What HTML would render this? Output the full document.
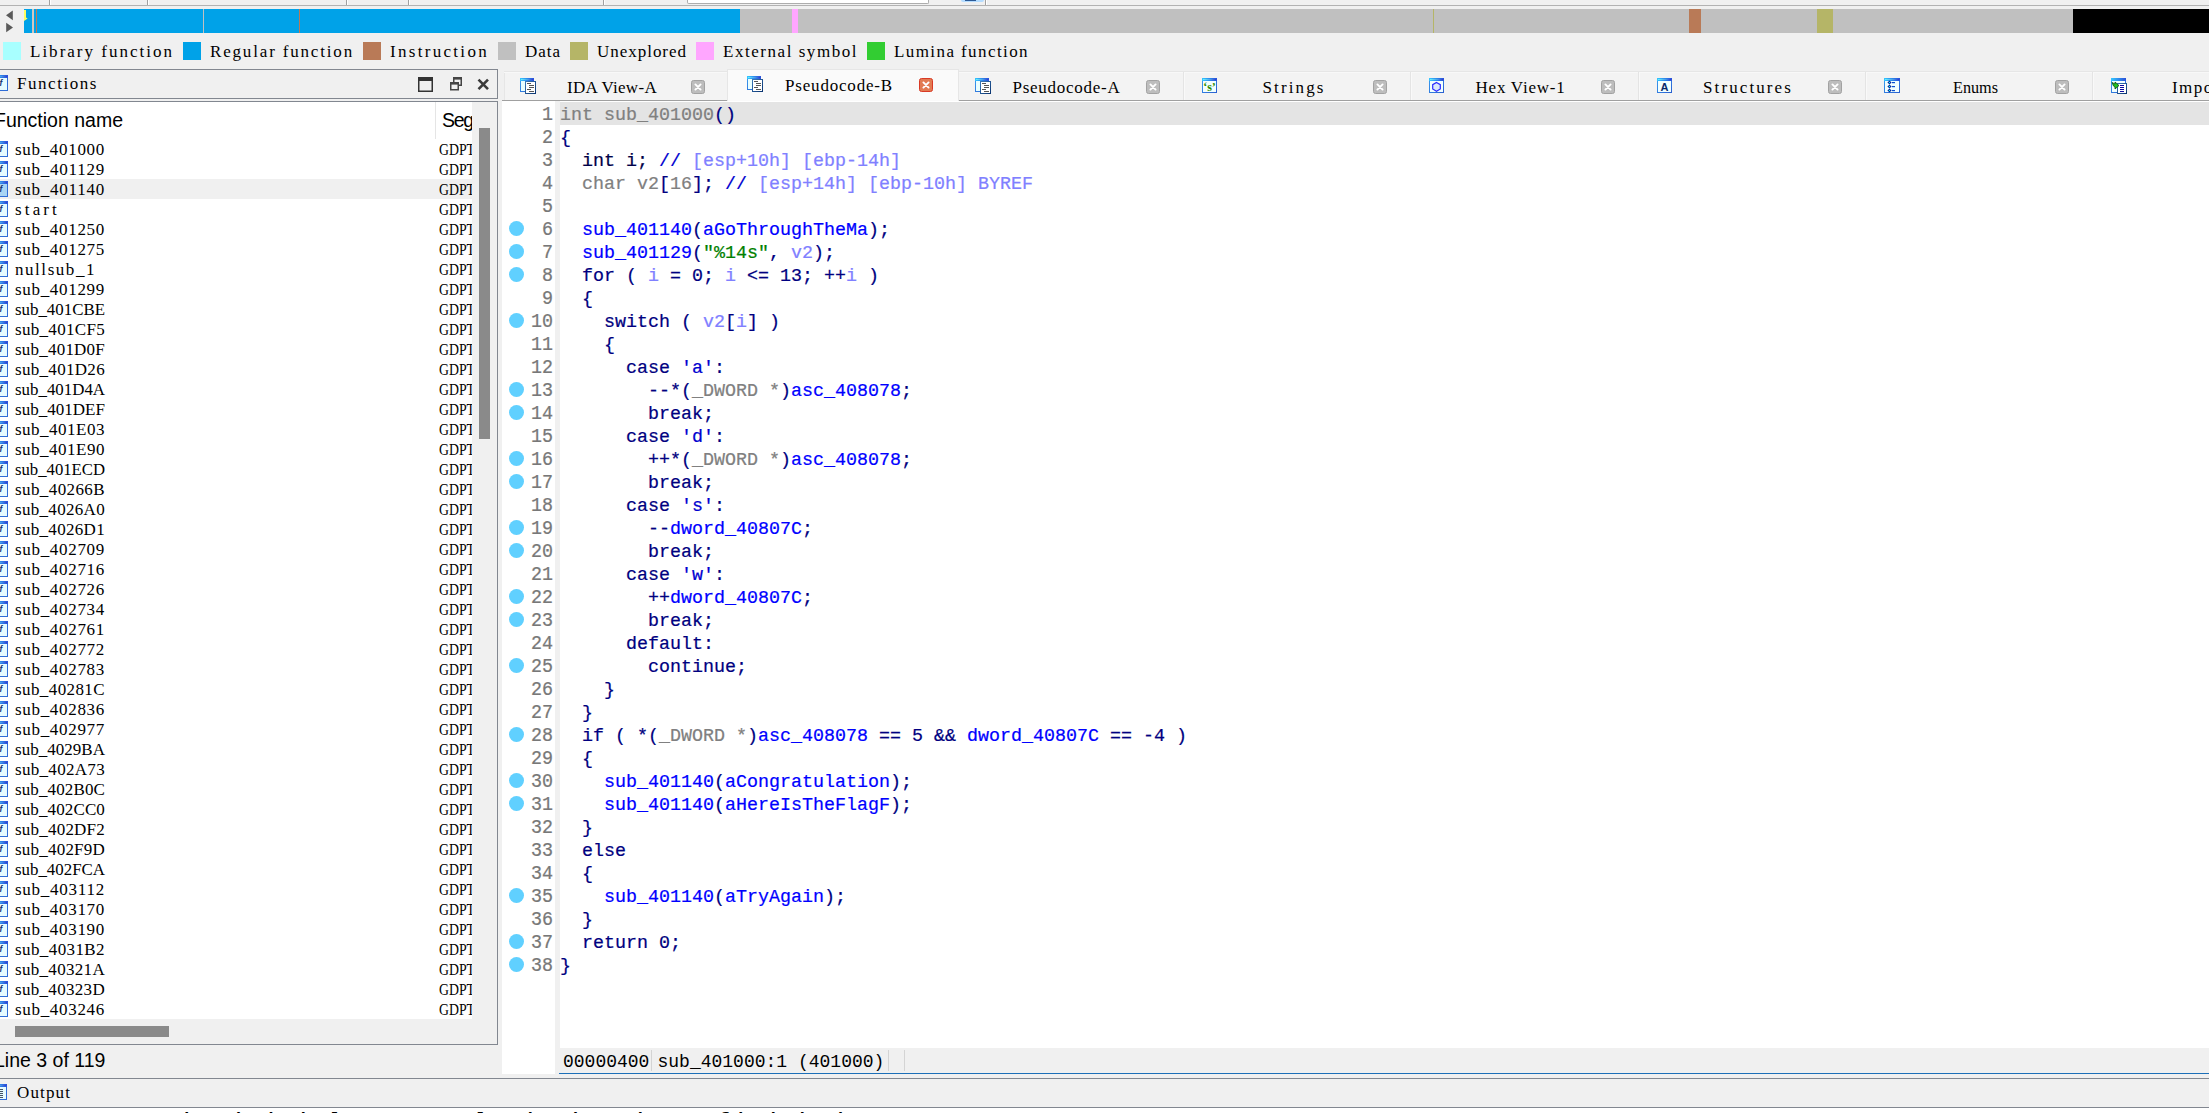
<!DOCTYPE html>
<html lang="en"><head><meta charset="utf-8"><title>IDA</title>
<style>
*{box-sizing:border-box;margin:0;padding:0}
html,body{width:2209px;height:1113px;overflow:hidden;background:#f0f0f0}
body{position:relative;font-family:"Liberation Sans",sans-serif;color:#000}
.a{position:absolute}
.ss{position:absolute;font:17px/22px "Liberation Serif",serif;white-space:pre;transform-origin:0 0;color:#000}
.ui{position:absolute;font:19.5px/24px "Liberation Sans",sans-serif;white-space:pre;color:#000}
.sq{position:absolute;top:42px;width:18px;height:18px}
.lg{top:41px}
.row{position:absolute;left:0;width:472px;height:20px}
.row .ss{left:15px;top:0}
.row .sg{left:439px}
.row svg{position:absolute;left:-8px;top:2px}
.cl{position:absolute;left:0;width:1707px;height:23px;font:18.333px/23px "Liberation Mono",monospace;white-space:pre}
.cl b{font-weight:normal;position:absolute;left:58px;top:2px;-webkit-text-stroke:.22px;transform:scaleY(1.03);transform-origin:0 16px}
.cl i{font-style:normal;position:absolute;left:0;width:51px;text-align:right;color:#787878;top:2px;-webkit-text-stroke:.22px;transform:scaleY(1.06);transform-origin:0 16px}
.cl u{text-decoration:none;position:absolute;left:7px;top:4px;width:15px;height:15px;border-radius:50%;background:#60d0ff}
.tb svg{position:absolute}
</style></head>
<body>
<svg width="0" height="0" style="position:absolute">
<defs>
<linearGradient id="gb" x1="0" y1="0" x2="1" y2="0"><stop offset="0" stop-color="#35c8ff"/><stop offset="1" stop-color="#2a4fd8"/></linearGradient>
<linearGradient id="gw" x1="0" y1="0" x2="1" y2="1"><stop offset="0" stop-color="#3a9cf0"/><stop offset="1" stop-color="#2a60d0"/></linearGradient>
<linearGradient id="gd" x1="0" y1="0" x2="1" y2="1"><stop offset="0" stop-color="#3a78b8"/><stop offset="1" stop-color="#0a3470"/></linearGradient>
<linearGradient id="gh" x1="0" y1="0" x2="1" y2="0"><stop offset="0" stop-color="#6af4ff"/><stop offset=".6" stop-color="#4a9ae8"/><stop offset="1" stop-color="#3038d0"/></linearGradient>
<g id="win"><rect x="0.5" y="0.5" width="14" height="14" fill="#f2ffff" stroke="url(#gw)"/><rect x="0" y="0" width="15" height="3" fill="url(#gb)"/><rect x="1" y="1" width="13" height="1" fill="url(#gh)"/></g>
<g id="doc"><rect x="5.5" y="3.5" width="10" height="12" fill="#fff" stroke="url(#gd)"/><rect x="7" y="5" width="4" height="1" fill="#555"/><rect x="9" y="7" width="5" height="1" fill="#555"/><rect x="9" y="9" width="5" height="1" fill="#555"/><rect x="7" y="11" width="4" height="1" fill="#555"/><rect x="9" y="13" width="5" height="1" fill="#555"/></g>
<g id="icode"><rect x="0.5" y="0.5" width="13" height="13" fill="#eaffff" stroke="url(#gw)"/><rect x="0" y="0" width="14" height="3" fill="url(#gb)"/><rect x="1" y="1" width="12" height="1" fill="url(#gh)"/><use href="#doc"/></g>
<g id="xg"><rect x="0.5" y="0.5" width="13" height="13" rx="2" fill="#bdbdbd" stroke="#a2a2a2"/><path d="M4.4 4.4L9.6 9.6M9.6 4.4L4.4 9.6" stroke="#fff" stroke-width="1.9" stroke-linecap="round"/></g>
<g id="xr"><rect x="0.5" y="0.5" width="13" height="13" rx="2" fill="#e27a52" stroke="#d93a25"/><path d="M4.4 4.4L9.6 9.6M9.6 4.4L4.4 9.6" stroke="#fff" stroke-width="1.9" stroke-linecap="round"/></g>
<g id="fi"><rect x="0.5" y="0.5" width="15" height="15" fill="#e6fbff" stroke="#2e6cd6"/><rect x="0" y="0" width="16" height="3" fill="url(#gb)"/><rect x="1" y="1" width="14" height="1" fill="url(#gh)"/></g>
<g id="fis"><rect x="0.5" y="0.5" width="15" height="15" fill="#a8d4f4" stroke="#2e6cd6"/><rect x="0" y="0" width="16" height="3" fill="url(#gb)"/><rect x="1" y="1" width="14" height="1" fill="url(#gh)"/></g>
</defs></svg>
<div class="a" style="left:0;top:5px;width:2209px;height:1px;background:#b2b2b2"></div>
<div class="a" style="left:49px;top:0;width:1px;height:5px;background:#a0a0a0"></div><div class="a" style="left:50px;top:0;width:1px;height:5px;background:#fff"></div>
<div class="a" style="left:147px;top:0;width:1px;height:5px;background:#a0a0a0"></div><div class="a" style="left:148px;top:0;width:1px;height:5px;background:#fff"></div>
<div class="a" style="left:346px;top:0;width:1px;height:5px;background:#a0a0a0"></div><div class="a" style="left:347px;top:0;width:1px;height:5px;background:#fff"></div>
<div class="a" style="left:408px;top:0;width:1px;height:5px;background:#a0a0a0"></div><div class="a" style="left:409px;top:0;width:1px;height:5px;background:#fff"></div>
<div class="a" style="left:603px;top:0;width:1px;height:5px;background:#a0a0a0"></div><div class="a" style="left:604px;top:0;width:1px;height:5px;background:#fff"></div>
<div class="a" style="left:985px;top:0;width:1px;height:5px;background:#a0a0a0"></div><div class="a" style="left:986px;top:0;width:1px;height:5px;background:#fff"></div>
<div class="a" style="left:687px;top:0;width:242px;height:4px;background:#fff;border:1px solid #adadad;border-top:0;border-radius:0 0 2px 2px"></div>
<div class="a" style="left:961px;top:0;width:23px;height:2px;background:#b4dcff;border-radius:0 0 3px 3px"></div><div class="a" style="left:965px;top:0;width:11px;height:1px;background:#2c5a96"></div>
<svg class="a" style="left:0;top:9px" width="24" height="24" viewBox="0 0 24 24"><path d="M6 6.3L12.8 1.5V11.2Z" fill="#5a5a5a"/><path d="M6.2 13.8V23.3L13 18.6Z" fill="#5a5a5a"/></svg>
<div class="a" style="left:24px;top:9px;width:2185px;height:24px;background:#c0c0c0;overflow:hidden"><div class="a" style="left:0px;top:0;width:716px;height:24px;background:#00a2e8"></div><div class="a" style="left:8px;top:0;width:2px;height:24px;background:#d3c6bf"></div><div class="a" style="left:12px;top:0;width:1px;height:24px;background:#b97a57"></div><div class="a" style="left:179px;top:0;width:1px;height:24px;background:#c0c0c0"></div><div class="a" style="left:275px;top:0;width:1px;height:24px;background:#b97a57"></div><div class="a" style="left:768px;top:0;width:6px;height:24px;background:#ffa6ff"></div><div class="a" style="left:1409px;top:0;width:1px;height:24px;background:#b5b567"></div><div class="a" style="left:1665px;top:0;width:12px;height:24px;background:#b97a57"></div><div class="a" style="left:1793px;top:0;width:16px;height:24px;background:#b5b567"></div><div class="a" style="left:2049px;top:0;width:136px;height:24px;background:#000"></div><svg class="a" style="left:0;top:1px" width="5" height="11" viewBox="0 0 5 11"><path d="M0 0H2V7.5L3.6 8.5L0 11Z" fill="#ffff60"/></svg></div>
<div class="sq" style="left:3px;background:#a8ffff"></div><div class="ss lg" style="left:30px;letter-spacing:2.007px;">Library function</div>
<div class="sq" style="left:183px;background:#00a2e8"></div><div class="ss lg" style="left:210px;letter-spacing:1.830px;">Regular function</div>
<div class="sq" style="left:363px;background:#b97a57"></div><div class="ss lg" style="left:390px;letter-spacing:2.304px;">Instruction</div>
<div class="sq" style="left:498px;background:#c0c0c0"></div><div class="ss lg" style="left:525px;letter-spacing:0.977px;">Data</div>
<div class="sq" style="left:570px;background:#b5b567"></div><div class="ss lg" style="left:597px;letter-spacing:0.973px;">Unexplored</div>
<div class="sq" style="left:696px;background:#ffa6ff"></div><div class="ss lg" style="left:723px;letter-spacing:1.540px;">External symbol</div>
<div class="sq" style="left:867px;background:#32cd32"></div><div class="ss lg" style="left:894px;letter-spacing:1.415px;">Lumina function</div>
<div class="a" style="left:-1px;top:69px;width:499px;height:30px;border:1px solid #828790;background:#f0f0f0"></div>
<svg class="a" style="left:-8px;top:75px" width="16" height="16"><use href="#fi"/><text x="8.8" y="10.8" font-family="Liberation Sans,sans-serif" font-style="italic" font-weight="bold" font-size="8.5" text-anchor="middle" fill="#14326e">f</text></svg>
<div class="ss" style="left:17px;top:73px;letter-spacing:1.549px;">Functions</div>
<svg class="a" style="left:418px;top:77px" width="15" height="15"><rect x="0.75" y="0.75" width="13.5" height="13.5" fill="#f0f0f0" stroke="#333" stroke-width="1.5"/><rect x="0" y="0" width="15" height="4" fill="#333"/></svg>
<svg class="a" style="left:450px;top:77px" width="13" height="14"><rect x="3.75" y="0.75" width="7.5" height="7.5" fill="#f0f0f0" stroke="#444" stroke-width="1.5"/><rect x="3" y="0" width="9" height="2.6" fill="#444"/><rect x="0.75" y="5.75" width="7.5" height="7" fill="#f0f0f0" stroke="#444" stroke-width="1.5"/><rect x="0" y="5" width="9" height="2.6" fill="#444"/></svg>
<svg class="a" style="left:477px;top:78px" width="13" height="13"><path d="M1.5 1.7L11 11.2M11 1.7L1.5 11.2" stroke="#3a3a3a" stroke-width="2.6" fill="none"/></svg>
<div class="a" style="left:-1px;top:101px;width:499px;height:944px;border:1px solid #828790;background:#f0f0f0"></div>
<div class="a" style="left:0;top:102px;width:472px;height:917px;background:#fff;overflow:hidden">
<div class="a" style="left:435px;top:0;width:1px;height:37px;background:#e5e5e5"></div><div class="ui" style="left:-6px;top:6px">Function name</div><div class="ui" style="left:442px;top:6px;letter-spacing:-1.3px">Seg</div>
<div class="row" style="top:37px"><svg width="16" height="16"><use href="#fi"/><text x="8.8" y="10.8" font-family="Liberation Sans,sans-serif" font-style="italic" font-weight="bold" font-size="8.5" text-anchor="middle" fill="#14326e">f</text></svg><span class="ss" style="letter-spacing:0.688px;">sub_401000</span><span class="ss sg" style="transform:scaleX(0.8107);">GDPT</span></div>
<div class="row" style="top:57px"><svg width="16" height="16"><use href="#fi"/><text x="8.8" y="10.8" font-family="Liberation Sans,sans-serif" font-style="italic" font-weight="bold" font-size="8.5" text-anchor="middle" fill="#14326e">f</text></svg><span class="ss" style="letter-spacing:0.750px;">sub_401129</span><span class="ss sg" style="transform:scaleX(0.8107);">GDPT</span></div>
<div class="row" style="top:77px;background:#f0f0f0"><svg width="16" height="16"><use href="#fis"/><text x="8.8" y="10.8" font-family="Liberation Sans,sans-serif" font-style="italic" font-weight="bold" font-size="8.5" text-anchor="middle" fill="#14326e">f</text></svg><span class="ss" style="letter-spacing:0.750px;">sub_401140</span><span class="ss sg" style="transform:scaleX(0.8107);">GDPT</span></div>
<div class="row" style="top:97px"><svg width="16" height="16"><use href="#fi"/><text x="8.8" y="10.8" font-family="Liberation Sans,sans-serif" font-style="italic" font-weight="bold" font-size="8.5" text-anchor="middle" fill="#14326e">f</text></svg><span class="ss" style="letter-spacing:3.144px;">start</span><span class="ss sg" style="transform:scaleX(0.8107);">GDPT</span></div>
<div class="row" style="top:117px"><svg width="16" height="16"><use href="#fi"/><text x="8.8" y="10.8" font-family="Liberation Sans,sans-serif" font-style="italic" font-weight="bold" font-size="8.5" text-anchor="middle" fill="#14326e">f</text></svg><span class="ss" style="letter-spacing:0.688px;">sub_401250</span><span class="ss sg" style="transform:scaleX(0.8107);">GDPT</span></div>
<div class="row" style="top:137px"><svg width="16" height="16"><use href="#fi"/><text x="8.8" y="10.8" font-family="Liberation Sans,sans-serif" font-style="italic" font-weight="bold" font-size="8.5" text-anchor="middle" fill="#14326e">f</text></svg><span class="ss" style="letter-spacing:0.688px;">sub_401275</span><span class="ss sg" style="transform:scaleX(0.8107);">GDPT</span></div>
<div class="row" style="top:157px"><svg width="16" height="16"><use href="#fi"/><text x="8.8" y="10.8" font-family="Liberation Sans,sans-serif" font-style="italic" font-weight="bold" font-size="8.5" text-anchor="middle" fill="#14326e">f</text></svg><span class="ss" style="letter-spacing:1.549px;">nullsub_1</span><span class="ss sg" style="transform:scaleX(0.8107);">GDPT</span></div>
<div class="row" style="top:177px"><svg width="16" height="16"><use href="#fi"/><text x="8.8" y="10.8" font-family="Liberation Sans,sans-serif" font-style="italic" font-weight="bold" font-size="8.5" text-anchor="middle" fill="#14326e">f</text></svg><span class="ss" style="letter-spacing:0.688px;">sub_401299</span><span class="ss sg" style="transform:scaleX(0.8107);">GDPT</span></div>
<div class="row" style="top:197px"><svg width="16" height="16"><use href="#fi"/><text x="8.8" y="10.8" font-family="Liberation Sans,sans-serif" font-style="italic" font-weight="bold" font-size="8.5" text-anchor="middle" fill="#14326e">f</text></svg><span class="ss" style="transform:scaleX(0.9924);">sub_401CBE</span><span class="ss sg" style="transform:scaleX(0.8107);">GDPT</span></div>
<div class="row" style="top:217px"><svg width="16" height="16"><use href="#fi"/><text x="8.8" y="10.8" font-family="Liberation Sans,sans-serif" font-style="italic" font-weight="bold" font-size="8.5" text-anchor="middle" fill="#14326e">f</text></svg><span class="ss" style="letter-spacing:0.308px;">sub_401CF5</span><span class="ss sg" style="transform:scaleX(0.8107);">GDPT</span></div>
<div class="row" style="top:237px"><svg width="16" height="16"><use href="#fi"/><text x="8.8" y="10.8" font-family="Liberation Sans,sans-serif" font-style="italic" font-weight="bold" font-size="8.5" text-anchor="middle" fill="#14326e">f</text></svg><span class="ss" style="letter-spacing:0.214px;">sub_401D0F</span><span class="ss sg" style="transform:scaleX(0.8107);">GDPT</span></div>
<div class="row" style="top:257px"><svg width="16" height="16"><use href="#fi"/><text x="8.8" y="10.8" font-family="Liberation Sans,sans-serif" font-style="italic" font-weight="bold" font-size="8.5" text-anchor="middle" fill="#14326e">f</text></svg><span class="ss" style="letter-spacing:0.309px;">sub_401D26</span><span class="ss sg" style="transform:scaleX(0.8107);">GDPT</span></div>
<div class="row" style="top:277px"><svg width="16" height="16"><use href="#fi"/><text x="8.8" y="10.8" font-family="Liberation Sans,sans-serif" font-style="italic" font-weight="bold" font-size="8.5" text-anchor="middle" fill="#14326e">f</text></svg><span class="ss" style="transform:scaleX(0.9926);">sub_401D4A</span><span class="ss sg" style="transform:scaleX(0.8107);">GDPT</span></div>
<div class="row" style="top:297px"><svg width="16" height="16"><use href="#fi"/><text x="8.8" y="10.8" font-family="Liberation Sans,sans-serif" font-style="italic" font-weight="bold" font-size="8.5" text-anchor="middle" fill="#14326e">f</text></svg><span class="ss" style="letter-spacing:0.027px;">sub_401DEF</span><span class="ss sg" style="transform:scaleX(0.8107);">GDPT</span></div>
<div class="row" style="top:317px"><svg width="16" height="16"><use href="#fi"/><text x="8.8" y="10.8" font-family="Liberation Sans,sans-serif" font-style="italic" font-weight="bold" font-size="8.5" text-anchor="middle" fill="#14326e">f</text></svg><span class="ss" style="letter-spacing:0.500px;">sub_401E03</span><span class="ss sg" style="transform:scaleX(0.8107);">GDPT</span></div>
<div class="row" style="top:337px"><svg width="16" height="16"><use href="#fi"/><text x="8.8" y="10.8" font-family="Liberation Sans,sans-serif" font-style="italic" font-weight="bold" font-size="8.5" text-anchor="middle" fill="#14326e">f</text></svg><span class="ss" style="letter-spacing:0.500px;">sub_401E90</span><span class="ss sg" style="transform:scaleX(0.8107);">GDPT</span></div>
<div class="row" style="top:357px"><svg width="16" height="16"><use href="#fi"/><text x="8.8" y="10.8" font-family="Liberation Sans,sans-serif" font-style="italic" font-weight="bold" font-size="8.5" text-anchor="middle" fill="#14326e">f</text></svg><span class="ss" style="transform:scaleX(0.9823);">sub_401ECD</span><span class="ss sg" style="transform:scaleX(0.8107);">GDPT</span></div>
<div class="row" style="top:377px"><svg width="16" height="16"><use href="#fi"/><text x="8.8" y="10.8" font-family="Liberation Sans,sans-serif" font-style="italic" font-weight="bold" font-size="8.5" text-anchor="middle" fill="#14326e">f</text></svg><span class="ss" style="letter-spacing:0.403px;">sub_40266B</span><span class="ss sg" style="transform:scaleX(0.8107);">GDPT</span></div>
<div class="row" style="top:397px"><svg width="16" height="16"><use href="#fi"/><text x="8.8" y="10.8" font-family="Liberation Sans,sans-serif" font-style="italic" font-weight="bold" font-size="8.5" text-anchor="middle" fill="#14326e">f</text></svg><span class="ss" style="letter-spacing:0.309px;">sub_4026A0</span><span class="ss sg" style="transform:scaleX(0.8107);">GDPT</span></div>
<div class="row" style="top:417px"><svg width="16" height="16"><use href="#fi"/><text x="8.8" y="10.8" font-family="Liberation Sans,sans-serif" font-style="italic" font-weight="bold" font-size="8.5" text-anchor="middle" fill="#14326e">f</text></svg><span class="ss" style="letter-spacing:0.309px;">sub_4026D1</span><span class="ss sg" style="transform:scaleX(0.8107);">GDPT</span></div>
<div class="row" style="top:437px"><svg width="16" height="16"><use href="#fi"/><text x="8.8" y="10.8" font-family="Liberation Sans,sans-serif" font-style="italic" font-weight="bold" font-size="8.5" text-anchor="middle" fill="#14326e">f</text></svg><span class="ss" style="letter-spacing:0.688px;">sub_402709</span><span class="ss sg" style="transform:scaleX(0.8107);">GDPT</span></div>
<div class="row" style="top:457px"><svg width="16" height="16"><use href="#fi"/><text x="8.8" y="10.8" font-family="Liberation Sans,sans-serif" font-style="italic" font-weight="bold" font-size="8.5" text-anchor="middle" fill="#14326e">f</text></svg><span class="ss" style="letter-spacing:0.688px;">sub_402716</span><span class="ss sg" style="transform:scaleX(0.8107);">GDPT</span></div>
<div class="row" style="top:477px"><svg width="16" height="16"><use href="#fi"/><text x="8.8" y="10.8" font-family="Liberation Sans,sans-serif" font-style="italic" font-weight="bold" font-size="8.5" text-anchor="middle" fill="#14326e">f</text></svg><span class="ss" style="letter-spacing:0.688px;">sub_402726</span><span class="ss sg" style="transform:scaleX(0.8107);">GDPT</span></div>
<div class="row" style="top:497px"><svg width="16" height="16"><use href="#fi"/><text x="8.8" y="10.8" font-family="Liberation Sans,sans-serif" font-style="italic" font-weight="bold" font-size="8.5" text-anchor="middle" fill="#14326e">f</text></svg><span class="ss" style="letter-spacing:0.688px;">sub_402734</span><span class="ss sg" style="transform:scaleX(0.8107);">GDPT</span></div>
<div class="row" style="top:517px"><svg width="16" height="16"><use href="#fi"/><text x="8.8" y="10.8" font-family="Liberation Sans,sans-serif" font-style="italic" font-weight="bold" font-size="8.5" text-anchor="middle" fill="#14326e">f</text></svg><span class="ss" style="letter-spacing:0.688px;">sub_402761</span><span class="ss sg" style="transform:scaleX(0.8107);">GDPT</span></div>
<div class="row" style="top:537px"><svg width="16" height="16"><use href="#fi"/><text x="8.8" y="10.8" font-family="Liberation Sans,sans-serif" font-style="italic" font-weight="bold" font-size="8.5" text-anchor="middle" fill="#14326e">f</text></svg><span class="ss" style="letter-spacing:0.688px;">sub_402772</span><span class="ss sg" style="transform:scaleX(0.8107);">GDPT</span></div>
<div class="row" style="top:557px"><svg width="16" height="16"><use href="#fi"/><text x="8.8" y="10.8" font-family="Liberation Sans,sans-serif" font-style="italic" font-weight="bold" font-size="8.5" text-anchor="middle" fill="#14326e">f</text></svg><span class="ss" style="letter-spacing:0.688px;">sub_402783</span><span class="ss sg" style="transform:scaleX(0.8107);">GDPT</span></div>
<div class="row" style="top:577px"><svg width="16" height="16"><use href="#fi"/><text x="8.8" y="10.8" font-family="Liberation Sans,sans-serif" font-style="italic" font-weight="bold" font-size="8.5" text-anchor="middle" fill="#14326e">f</text></svg><span class="ss" style="letter-spacing:0.403px;">sub_40281C</span><span class="ss sg" style="transform:scaleX(0.8107);">GDPT</span></div>
<div class="row" style="top:597px"><svg width="16" height="16"><use href="#fi"/><text x="8.8" y="10.8" font-family="Liberation Sans,sans-serif" font-style="italic" font-weight="bold" font-size="8.5" text-anchor="middle" fill="#14326e">f</text></svg><span class="ss" style="letter-spacing:0.688px;">sub_402836</span><span class="ss sg" style="transform:scaleX(0.8107);">GDPT</span></div>
<div class="row" style="top:617px"><svg width="16" height="16"><use href="#fi"/><text x="8.8" y="10.8" font-family="Liberation Sans,sans-serif" font-style="italic" font-weight="bold" font-size="8.5" text-anchor="middle" fill="#14326e">f</text></svg><span class="ss" style="letter-spacing:0.688px;">sub_402977</span><span class="ss sg" style="transform:scaleX(0.8107);">GDPT</span></div>
<div class="row" style="top:637px"><svg width="16" height="16"><use href="#fi"/><text x="8.8" y="10.8" font-family="Liberation Sans,sans-serif" font-style="italic" font-weight="bold" font-size="8.5" text-anchor="middle" fill="#14326e">f</text></svg><span class="ss" style="letter-spacing:0.027px;">sub_4029BA</span><span class="ss sg" style="transform:scaleX(0.8107);">GDPT</span></div>
<div class="row" style="top:657px"><svg width="16" height="16"><use href="#fi"/><text x="8.8" y="10.8" font-family="Liberation Sans,sans-serif" font-style="italic" font-weight="bold" font-size="8.5" text-anchor="middle" fill="#14326e">f</text></svg><span class="ss" style="letter-spacing:0.309px;">sub_402A73</span><span class="ss sg" style="transform:scaleX(0.8107);">GDPT</span></div>
<div class="row" style="top:677px"><svg width="16" height="16"><use href="#fi"/><text x="8.8" y="10.8" font-family="Liberation Sans,sans-serif" font-style="italic" font-weight="bold" font-size="8.5" text-anchor="middle" fill="#14326e">f</text></svg><span class="ss" style="letter-spacing:0.120px;">sub_402B0C</span><span class="ss sg" style="transform:scaleX(0.8107);">GDPT</span></div>
<div class="row" style="top:697px"><svg width="16" height="16"><use href="#fi"/><text x="8.8" y="10.8" font-family="Liberation Sans,sans-serif" font-style="italic" font-weight="bold" font-size="8.5" text-anchor="middle" fill="#14326e">f</text></svg><span class="ss" style="letter-spacing:0.120px;">sub_402CC0</span><span class="ss sg" style="transform:scaleX(0.8107);">GDPT</span></div>
<div class="row" style="top:717px"><svg width="16" height="16"><use href="#fi"/><text x="8.8" y="10.8" font-family="Liberation Sans,sans-serif" font-style="italic" font-weight="bold" font-size="8.5" text-anchor="middle" fill="#14326e">f</text></svg><span class="ss" style="letter-spacing:0.214px;">sub_402DF2</span><span class="ss sg" style="transform:scaleX(0.8107);">GDPT</span></div>
<div class="row" style="top:737px"><svg width="16" height="16"><use href="#fi"/><text x="8.8" y="10.8" font-family="Liberation Sans,sans-serif" font-style="italic" font-weight="bold" font-size="8.5" text-anchor="middle" fill="#14326e">f</text></svg><span class="ss" style="letter-spacing:0.214px;">sub_402F9D</span><span class="ss sg" style="transform:scaleX(0.8107);">GDPT</span></div>
<div class="row" style="top:757px"><svg width="16" height="16"><use href="#fi"/><text x="8.8" y="10.8" font-family="Liberation Sans,sans-serif" font-style="italic" font-weight="bold" font-size="8.5" text-anchor="middle" fill="#14326e">f</text></svg><span class="ss" style="transform:scaleX(0.9924);">sub_402FCA</span><span class="ss sg" style="transform:scaleX(0.8107);">GDPT</span></div>
<div class="row" style="top:777px"><svg width="16" height="16"><use href="#fi"/><text x="8.8" y="10.8" font-family="Liberation Sans,sans-serif" font-style="italic" font-weight="bold" font-size="8.5" text-anchor="middle" fill="#14326e">f</text></svg><span class="ss" style="letter-spacing:0.750px;">sub_403112</span><span class="ss sg" style="transform:scaleX(0.8107);">GDPT</span></div>
<div class="row" style="top:797px"><svg width="16" height="16"><use href="#fi"/><text x="8.8" y="10.8" font-family="Liberation Sans,sans-serif" font-style="italic" font-weight="bold" font-size="8.5" text-anchor="middle" fill="#14326e">f</text></svg><span class="ss" style="letter-spacing:0.688px;">sub_403170</span><span class="ss sg" style="transform:scaleX(0.8107);">GDPT</span></div>
<div class="row" style="top:817px"><svg width="16" height="16"><use href="#fi"/><text x="8.8" y="10.8" font-family="Liberation Sans,sans-serif" font-style="italic" font-weight="bold" font-size="8.5" text-anchor="middle" fill="#14326e">f</text></svg><span class="ss" style="letter-spacing:0.688px;">sub_403190</span><span class="ss sg" style="transform:scaleX(0.8107);">GDPT</span></div>
<div class="row" style="top:837px"><svg width="16" height="16"><use href="#fi"/><text x="8.8" y="10.8" font-family="Liberation Sans,sans-serif" font-style="italic" font-weight="bold" font-size="8.5" text-anchor="middle" fill="#14326e">f</text></svg><span class="ss" style="letter-spacing:0.403px;">sub_4031B2</span><span class="ss sg" style="transform:scaleX(0.8107);">GDPT</span></div>
<div class="row" style="top:857px"><svg width="16" height="16"><use href="#fi"/><text x="8.8" y="10.8" font-family="Liberation Sans,sans-serif" font-style="italic" font-weight="bold" font-size="8.5" text-anchor="middle" fill="#14326e">f</text></svg><span class="ss" style="letter-spacing:0.309px;">sub_40321A</span><span class="ss sg" style="transform:scaleX(0.8107);">GDPT</span></div>
<div class="row" style="top:877px"><svg width="16" height="16"><use href="#fi"/><text x="8.8" y="10.8" font-family="Liberation Sans,sans-serif" font-style="italic" font-weight="bold" font-size="8.5" text-anchor="middle" fill="#14326e">f</text></svg><span class="ss" style="letter-spacing:0.309px;">sub_40323D</span><span class="ss sg" style="transform:scaleX(0.8107);">GDPT</span></div>
<div class="row" style="top:897px"><svg width="16" height="16"><use href="#fi"/><text x="8.8" y="10.8" font-family="Liberation Sans,sans-serif" font-style="italic" font-weight="bold" font-size="8.5" text-anchor="middle" fill="#14326e">f</text></svg><span class="ss" style="letter-spacing:0.688px;">sub_403246</span><span class="ss sg" style="transform:scaleX(0.8107);">GDPT</span></div>
</div>
<div class="a" style="left:479px;top:128px;width:11px;height:311px;background:#8a8a8a"></div>
<div class="a" style="left:15px;top:1026px;width:154px;height:11px;background:#8a8a8a"></div>
<div class="ui" style="left:-6px;top:1048px">Line 3 of 119</div>
<div class="a" style="left:502px;top:100px;width:1707px;height:1px;background:#a0a0a0"></div>
<div class="a" style="left:504px;top:71px;width:1705px;height:29px;background:#f3f3f3;border-top:1px solid #e6e6e6;border-left:1px solid #e6e6e6"></div>
<div class="a" style="left:504px;top:72px;width:1705px;height:1px;background:#f8f8f8"></div>
<div class="a" style="left:1183px;top:72px;width:1px;height:28px;background:#e4e4e4"></div><div class="a" style="left:1184px;top:72px;width:1px;height:28px;background:#f9f9f9"></div>
<div class="a" style="left:1410px;top:72px;width:1px;height:28px;background:#e4e4e4"></div><div class="a" style="left:1411px;top:72px;width:1px;height:28px;background:#f9f9f9"></div>
<div class="a" style="left:1638px;top:72px;width:1px;height:28px;background:#e4e4e4"></div><div class="a" style="left:1639px;top:72px;width:1px;height:28px;background:#f9f9f9"></div>
<div class="a" style="left:1865px;top:72px;width:1px;height:28px;background:#e4e4e4"></div><div class="a" style="left:1866px;top:72px;width:1px;height:28px;background:#f9f9f9"></div>
<div class="a" style="left:2092px;top:72px;width:1px;height:28px;background:#e4e4e4"></div><div class="a" style="left:2093px;top:72px;width:1px;height:28px;background:#f9f9f9"></div>
<div class="a" style="left:727px;top:69px;width:232px;height:33px;background:#fafafa;border:1px solid #e6e6e6;border-bottom:0"></div>
<div class="tb"><svg style="left:520px;top:78px" width="16" height="16"><use href="#icode"/></svg><div class="ss" style="left:567px;top:77px;letter-spacing:0.303px;">IDA View-A</div><svg style="left:691px;top:80px" width="14" height="14"><use href="#xg"/></svg></div>
<div class="tb"><svg style="left:747px;top:76px" width="16" height="16"><use href="#icode"/></svg><div class="ss" style="left:785px;top:75px;letter-spacing:0.815px;">Pseudocode-B</div><svg style="left:919px;top:78px" width="14" height="14"><use href="#xr"/></svg></div>
<div class="tb"><svg style="left:975px;top:78px" width="16" height="16"><use href="#icode"/></svg><div class="ss" style="left:1012.5px;top:77px;letter-spacing:0.737px;">Pseudocode-A</div><svg style="left:1146px;top:80px" width="14" height="14"><use href="#xg"/></svg></div>
<div class="tb"><svg style="left:1202px;top:78px" width="16" height="16"><use href="#win"/><text x="7.5" y="13" font-family="Liberation Serif,serif" font-weight="bold" font-size="12" text-anchor="middle" fill="#2a8a00">‘s’</text></svg><div class="ss" style="left:1262.5px;top:77px;letter-spacing:2.116px;">Strings</div><svg style="left:1373px;top:80px" width="14" height="14"><use href="#xg"/></svg></div>
<div class="tb"><svg style="left:1429px;top:78px" width="16" height="16"><use href="#win"/><path d="M7.5 4.5L11.3 6.7V11L7.5 13.2L3.7 11V6.7Z" fill="#dbe8fa" stroke="#2a2aff" stroke-width="1.2"/></svg><div class="ss" style="left:1475.5px;top:77px;letter-spacing:0.777px;">Hex View-1</div><svg style="left:1601px;top:80px" width="14" height="14"><use href="#xg"/></svg></div>
<div class="tb"><svg style="left:1657px;top:78px" width="16" height="16"><use href="#win"/><text x="7.6" y="13" font-family="Liberation Sans,sans-serif" font-weight="bold" font-size="11" text-anchor="middle" fill="#0a2a6a">A</text></svg><div class="ss" style="left:1703px;top:77px;letter-spacing:2.106px;">Structures</div><svg style="left:1828px;top:80px" width="14" height="14"><use href="#xg"/></svg></div>
<div class="tb"><svg style="left:1884px;top:78px" width="16" height="16"><rect x="0.5" y="0.5" width="15" height="14" fill="#f2ffff" stroke="url(#gw)"/><rect x="0" y="0" width="16" height="3" fill="url(#gb)"/><rect x="1" y="1" width="14" height="1" fill="url(#gh)"/><rect x="4" y="3" width="3" height="3" fill="#0a2a9a" transform="rotate(45 5.5 4.5)"/><rect x="5" y="4" width="1" height="1" fill="#0ff"/><rect x="8" y="4" width="3" height="1.2" fill="#0a50d0"/><rect x="4" y="7" width="3" height="3" fill="#0a2a9a" transform="rotate(45 5.5 8.5)"/><rect x="5" y="8" width="1" height="1" fill="#0ff"/><rect x="8" y="8" width="3" height="1.2" fill="#0a50d0"/><rect x="4" y="11" width="3" height="3" fill="#0a2a9a" transform="rotate(45 5.5 12.5)"/><rect x="5" y="12" width="1" height="1" fill="#0ff"/><rect x="8" y="12" width="3" height="1.2" fill="#0a50d0"/></svg><div class="ss" style="left:1952.5px;top:77px;transform:scaleX(0.9527);">Enums</div><svg style="left:2055px;top:80px" width="14" height="14"><use href="#xg"/></svg></div>
<div class="tb"><svg style="left:2111px;top:78px" width="17" height="16"><rect x="0.5" y="0.5" width="14" height="14" fill="#f2ffff" stroke="url(#gw)"/><rect x="0" y="0" width="15" height="3" fill="url(#gb)"/><rect x="6.5" y="5.5" width="9" height="10" fill="#fff" stroke="url(#gd)"/><rect x="9" y="7" width="4" height="1" fill="#0a0aa0"/><rect x="9" y="9" width="4" height="1" fill="#0a0aa0"/><rect x="9" y="11" width="4" height="1" fill="#0a0aa0"/><rect x="9" y="13" width="4" height="1" fill="#0a0aa0"/><path d="M1 4.5L4 6V4L8 7.5L4 11V9L2.5 8Z" fill="#20c020" stroke="#0a4a0a" stroke-width="0.8"/></svg><div class="ss" style="left:2172px;top:77px;letter-spacing:1.444px;">Imports</div><svg style="left:2282px;top:80px" width="14" height="14"><use href="#xg"/></svg></div>
<div class="a" style="left:502px;top:101px;width:53px;height:973px;background:#fff"></div>
<div class="a" style="left:560px;top:101px;width:1649px;height:947px;background:#fff"></div>
<div class="a" style="left:560px;top:102px;width:1649px;height:23px;background:#e4e4e4"></div>
<div class="a" style="left:502px;top:102px;width:1707px;height:946px;overflow:hidden">
<div class="cl" style="top:0px"><i>1</i><b><span style="color:#808080">int sub_401000</span><span style="color:#000080">()</span></b></div>
<div class="cl" style="top:23px"><i>2</i><b><span style="color:#000080">{</span></b></div>
<div class="cl" style="top:46px"><i>3</i><b><span style="color:#000048">  int i; </span><span style="color:#0000d0">// </span><span style="color:#8080ff">[esp+10h] [ebp-14h]</span></b></div>
<div class="cl" style="top:69px"><i>4</i><b><span style="color:#000080">  </span><span style="color:#808080">char v2</span><span style="color:#000080">[</span><span style="color:#808080">16</span><span style="color:#000080">]; </span><span style="color:#0000d0">// </span><span style="color:#8080ff">[esp+14h] [ebp-10h] BYREF</span></b></div>
<div class="cl" style="top:92px"><i>5</i><b></b></div>
<div class="cl" style="top:115px"><u></u><i>6</i><b><span style="color:#000080">  </span><span style="color:#0000ff">sub_401140</span><span style="color:#000080">(</span><span style="color:#0000ff">aGoThroughTheMa</span><span style="color:#000080">);</span></b></div>
<div class="cl" style="top:138px"><u></u><i>7</i><b><span style="color:#000080">  </span><span style="color:#0000ff">sub_401129</span><span style="color:#000080">(</span><span style="color:#008000">"%14s"</span><span style="color:#000080">, </span><span style="color:#8080ff">v2</span><span style="color:#000080">);</span></b></div>
<div class="cl" style="top:161px"><u></u><i>8</i><b><span style="color:#000080">  for ( </span><span style="color:#8080ff">i</span><span style="color:#000080"> = 0; </span><span style="color:#8080ff">i</span><span style="color:#000080"> &lt;= 13; ++</span><span style="color:#8080ff">i</span><span style="color:#000080"> )</span></b></div>
<div class="cl" style="top:184px"><i>9</i><b><span style="color:#000080">  {</span></b></div>
<div class="cl" style="top:207px"><u></u><i>10</i><b><span style="color:#000080">    switch ( </span><span style="color:#8080ff">v2</span><span style="color:#000080">[</span><span style="color:#8080ff">i</span><span style="color:#000080">] )</span></b></div>
<div class="cl" style="top:230px"><i>11</i><b><span style="color:#000080">    {</span></b></div>
<div class="cl" style="top:253px"><i>12</i><b><span style="color:#000080">      case </span><span style="color:#0000d0">'a'</span><span style="color:#000080">:</span></b></div>
<div class="cl" style="top:276px"><u></u><i>13</i><b><span style="color:#000080">        --*(</span><span style="color:#808080">_DWORD *</span><span style="color:#000080">)</span><span style="color:#0000ff">asc_408078</span><span style="color:#000080">;</span></b></div>
<div class="cl" style="top:299px"><u></u><i>14</i><b><span style="color:#000080">        break;</span></b></div>
<div class="cl" style="top:322px"><i>15</i><b><span style="color:#000080">      case </span><span style="color:#0000d0">'d'</span><span style="color:#000080">:</span></b></div>
<div class="cl" style="top:345px"><u></u><i>16</i><b><span style="color:#000080">        ++*(</span><span style="color:#808080">_DWORD *</span><span style="color:#000080">)</span><span style="color:#0000ff">asc_408078</span><span style="color:#000080">;</span></b></div>
<div class="cl" style="top:368px"><u></u><i>17</i><b><span style="color:#000080">        break;</span></b></div>
<div class="cl" style="top:391px"><i>18</i><b><span style="color:#000080">      case </span><span style="color:#0000d0">'s'</span><span style="color:#000080">:</span></b></div>
<div class="cl" style="top:414px"><u></u><i>19</i><b><span style="color:#000080">        --</span><span style="color:#0000ff">dword_40807C</span><span style="color:#000080">;</span></b></div>
<div class="cl" style="top:437px"><u></u><i>20</i><b><span style="color:#000080">        break;</span></b></div>
<div class="cl" style="top:460px"><i>21</i><b><span style="color:#000080">      case </span><span style="color:#0000d0">'w'</span><span style="color:#000080">:</span></b></div>
<div class="cl" style="top:483px"><u></u><i>22</i><b><span style="color:#000080">        ++</span><span style="color:#0000ff">dword_40807C</span><span style="color:#000080">;</span></b></div>
<div class="cl" style="top:506px"><u></u><i>23</i><b><span style="color:#000080">        break;</span></b></div>
<div class="cl" style="top:529px"><i>24</i><b><span style="color:#000080">      default:</span></b></div>
<div class="cl" style="top:552px"><u></u><i>25</i><b><span style="color:#000080">        continue;</span></b></div>
<div class="cl" style="top:575px"><i>26</i><b><span style="color:#000080">    }</span></b></div>
<div class="cl" style="top:598px"><i>27</i><b><span style="color:#000080">  }</span></b></div>
<div class="cl" style="top:621px"><u></u><i>28</i><b><span style="color:#000080">  if ( *(</span><span style="color:#808080">_DWORD *</span><span style="color:#000080">)</span><span style="color:#0000ff">asc_408078</span><span style="color:#000080"> == 5 &amp;&amp; </span><span style="color:#0000ff">dword_40807C</span><span style="color:#000080"> == -4 )</span></b></div>
<div class="cl" style="top:644px"><i>29</i><b><span style="color:#000080">  {</span></b></div>
<div class="cl" style="top:667px"><u></u><i>30</i><b><span style="color:#000080">    </span><span style="color:#0000ff">sub_401140</span><span style="color:#000080">(</span><span style="color:#0000ff">aCongratulation</span><span style="color:#000080">);</span></b></div>
<div class="cl" style="top:690px"><u></u><i>31</i><b><span style="color:#000080">    </span><span style="color:#0000ff">sub_401140</span><span style="color:#000080">(</span><span style="color:#0000ff">aHereIsTheFlagF</span><span style="color:#000080">);</span></b></div>
<div class="cl" style="top:713px"><i>32</i><b><span style="color:#000080">  }</span></b></div>
<div class="cl" style="top:736px"><i>33</i><b><span style="color:#000080">  else</span></b></div>
<div class="cl" style="top:759px"><i>34</i><b><span style="color:#000080">  {</span></b></div>
<div class="cl" style="top:782px"><u></u><i>35</i><b><span style="color:#000080">    </span><span style="color:#0000ff">sub_401140</span><span style="color:#000080">(</span><span style="color:#0000ff">aTryAgain</span><span style="color:#000080">);</span></b></div>
<div class="cl" style="top:805px"><i>36</i><b><span style="color:#000080">  }</span></b></div>
<div class="cl" style="top:828px"><u></u><i>37</i><b><span style="color:#000080">  return 0;</span></b></div>
<div class="cl" style="top:851px"><u></u><i>38</i><b><span style="color:#000080">}</span></b></div>
</div>
<div class="a" style="left:559px;top:1073px;width:1650px;height:1px;background:#1c6fb8"></div>
<div class="a" style="left:563px;top:1051px;font:18px/22px 'Liberation Mono',monospace;white-space:pre">00000400</div>
<div class="a" style="left:651px;top:1050px;width:1px;height:21px;background:#d4d4d4"></div>
<div class="a" style="left:657.5px;top:1051px;font:18px/22px 'Liberation Mono',monospace;white-space:pre">sub_401000:1 (401000)</div>
<div class="a" style="left:888px;top:1050px;width:1px;height:21px;background:#d4d4d4"></div>
<div class="a" style="left:904px;top:1050px;width:1px;height:21px;background:#d4d4d4"></div>
<div class="a" style="left:0;top:1078px;width:2209px;height:1px;background:#828790"></div>
<div class="a" style="left:0;top:1107px;width:2209px;height:1px;background:#828790"></div>
<svg class="a" style="left:-9px;top:1084px" width="16" height="16"><use href="#fi"/><rect x="3" y="5" width="9" height="1" fill="#456"/><rect x="3" y="7" width="9" height="1" fill="#456"/><rect x="3" y="9" width="9" height="1" fill="#456"/><rect x="3" y="11" width="9" height="1" fill="#456"/><rect x="3" y="13" width="9" height="1" fill="#456"/></svg>
<div class="ss" style="left:17px;top:1082px;letter-spacing:1.128px;">Output</div>
<div class="a" style="left:0;top:1108px;width:2209px;height:5px;background:#fff;overflow:hidden"><div class="a" style="left:168px;top:1px;font:bold 18px/22px 'Liberation Mono',monospace;letter-spacing:5.4px;white-space:pre;color:#000">the initial autoanalysis has been finished.</div></div>
</body></html>
